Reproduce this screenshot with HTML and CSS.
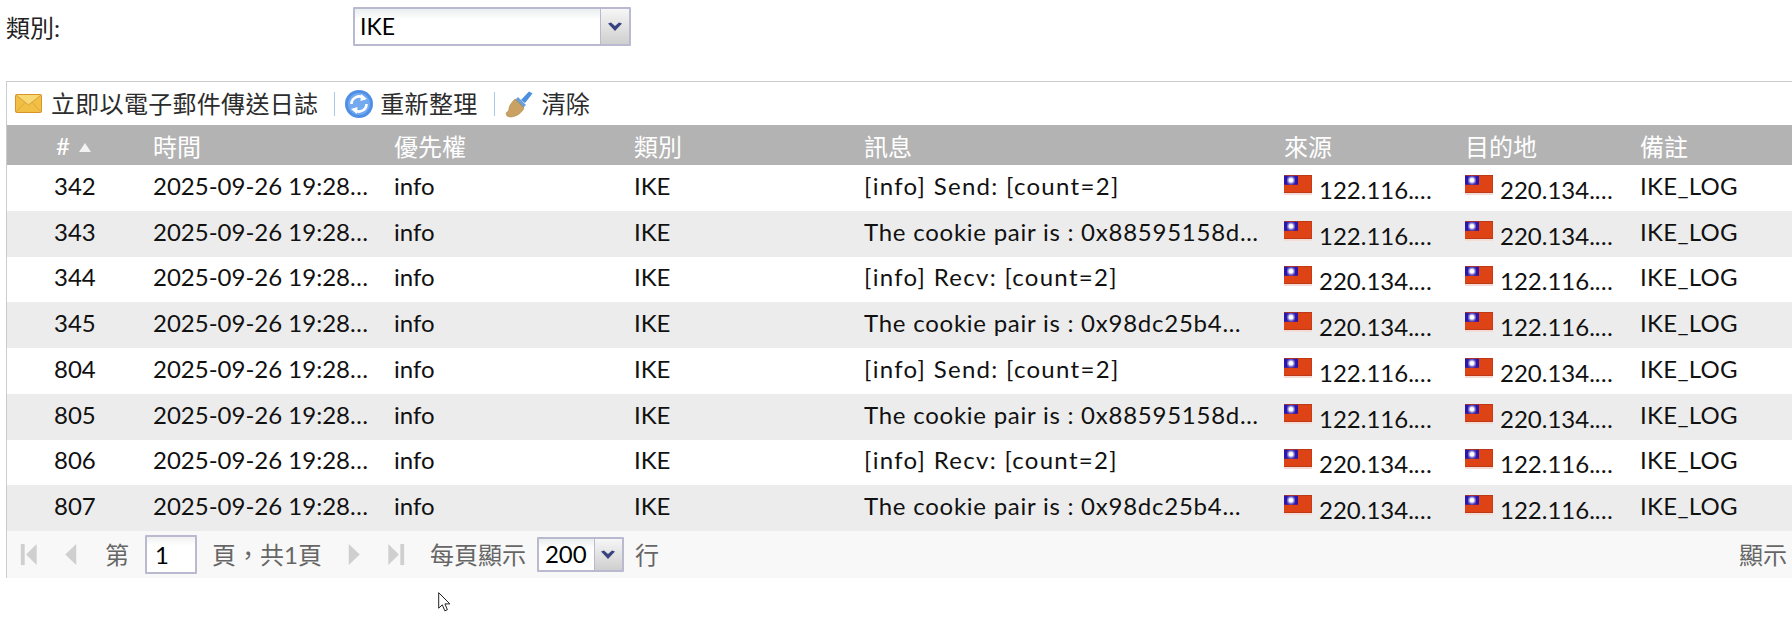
FILE: index.html
```html
<!DOCTYPE html>
<html lang="zh-Hant">
<head>
<meta charset="utf-8">
<title>日誌</title>
<link rel="stylesheet" href="styles.css">
</head>
<body>
<svg class="defs" width="0" height="0" aria-hidden="true">
  <defs>
    <filter id="soft"><feGaussianBlur stdDeviation="0.9"/></filter>
    <symbol id="flag" viewBox="0 0 28 20">
      <rect width="28" height="20" fill="#f3dcd6"/>
      <rect y="0" width="28" height="18" fill="#b5391a"/>
      <rect x="0" y="0.8" width="27.4" height="16.4" fill="#de4315"/>
      <rect x="0" y="0.8" width="14" height="9" fill="#2a17ad"/>
      <circle cx="7" cy="5.2" r="3.2" fill="#fff" filter="url(#soft)"/>
      <circle cx="7" cy="5.2" r="2" fill="#fff"/>
    </symbol>
    <symbol id="chev" viewBox="0 0 16 10">
      <path d="M1 1.5 L4 0.5 L8 4 L12 0.5 L15 1.5 L8 9 Z" fill="#37447f"/>
    </symbol>
  </defs>
</svg>

<div class="filter">
  <label class="filter-label">類別:</label>
  <div class="combo combo-large">
    <span class="combo-value">IKE</span>
    <span class="combo-btn"><svg class="chev"><use href="#chev"/></svg></span>
  </div>
</div>

<section class="panel">
  <div class="toolbar">
    <button class="tool">
      <svg class="ico-mail" viewBox="0 0 27 19"><rect x="0.5" y="0.5" width="26" height="18" rx="1" fill="#f2bf45" stroke="#d9932b"/><path d="M1 1 L13.5 11 L26 1" fill="#f7d873" stroke="#d9a03a"/><path d="M1 18 L10 8.5 M26 18 L17 8.5" stroke="#dfa53e" fill="none"/></svg>
      立即以電子郵件傳送日誌
    </button>
    <span class="sep"></span>
    <button class="tool tool-refresh">
      <svg class="ico-round" viewBox="0 0 28 28"><circle cx="14" cy="14" r="14" fill="#4f8fe6"/><circle cx="14" cy="14" r="11" fill="#73a9ef"/><path d="M6.5 14 A7.5 7.5 0 0 1 18.5 8" fill="none" stroke="#fff" stroke-width="2.6"/><path d="M21.5 14 A7.5 7.5 0 0 1 9.5 20" fill="none" stroke="#fff" stroke-width="2.6"/><path d="M16 4 L22 9 L15.5 11 Z M12 24 L6 19 L12.5 17 Z" fill="#fff"/></svg>
      重新整理
    </button>
    <span class="sep"></span>
    <button class="tool tool-clear">
      <svg class="ico-round" viewBox="0 0 28 28"><path d="M16 10 L24 1.5 L27.5 3.5 L20 13 Z" fill="#4c8fe0"/><path d="M13 7 L21 15 L18 18 L10 10 Z" fill="#6a9fd8"/><path d="M10 9 L19 18 C17 23 11 27 5 27 L2 26 L1 23 C2 22 4 21 4 19 C4 16 7 12 10 9 Z" fill="#c9a263" stroke="#a98547" stroke-width="0.6"/></svg>
      清除
    </button>
  </div>

  <table class="grid">
    <colgroup>
      <col class="c-num"><col class="c-time"><col class="c-pri"><col class="c-cat"><col class="c-msg"><col class="c-src"><col class="c-dst"><col class="c-note">
    </colgroup>
    <thead>
      <tr><th class="num-head">#<span class="sort"></span></th><th>時間</th><th>優先權</th><th>類別</th><th>訊息</th><th>來源</th><th>目的地</th><th>備註</th></tr>
    </thead>
    <tbody>
      <tr><td>342</td><td>2025-09-26 19:28…</td><td>info</td><td>IKE</td><td class="msg-short">[info] Send: [count=2]</td><td><svg class="flag"><use href="#flag"/></svg><span class="ip">122.116.…</span></td><td><svg class="flag"><use href="#flag"/></svg><span class="ip">220.134.…</span></td><td class="note">IKE_LOG</td></tr>
      <tr><td>343</td><td>2025-09-26 19:28…</td><td>info</td><td>IKE</td><td class="msg-long">The cookie pair is : 0x88595158d…</td><td><svg class="flag"><use href="#flag"/></svg><span class="ip">122.116.…</span></td><td><svg class="flag"><use href="#flag"/></svg><span class="ip">220.134.…</span></td><td class="note">IKE_LOG</td></tr>
      <tr><td>344</td><td>2025-09-26 19:28…</td><td>info</td><td>IKE</td><td class="msg-short">[info] Recv: [count=2]</td><td><svg class="flag"><use href="#flag"/></svg><span class="ip">220.134.…</span></td><td><svg class="flag"><use href="#flag"/></svg><span class="ip">122.116.…</span></td><td class="note">IKE_LOG</td></tr>
      <tr><td>345</td><td>2025-09-26 19:28…</td><td>info</td><td>IKE</td><td class="msg-long">The cookie pair is : 0x98dc25b4…</td><td><svg class="flag"><use href="#flag"/></svg><span class="ip">220.134.…</span></td><td><svg class="flag"><use href="#flag"/></svg><span class="ip">122.116.…</span></td><td class="note">IKE_LOG</td></tr>
      <tr><td>804</td><td>2025-09-26 19:28…</td><td>info</td><td>IKE</td><td class="msg-short">[info] Send: [count=2]</td><td><svg class="flag"><use href="#flag"/></svg><span class="ip">122.116.…</span></td><td><svg class="flag"><use href="#flag"/></svg><span class="ip">220.134.…</span></td><td class="note">IKE_LOG</td></tr>
      <tr><td>805</td><td>2025-09-26 19:28…</td><td>info</td><td>IKE</td><td class="msg-long">The cookie pair is : 0x88595158d…</td><td><svg class="flag"><use href="#flag"/></svg><span class="ip">122.116.…</span></td><td><svg class="flag"><use href="#flag"/></svg><span class="ip">220.134.…</span></td><td class="note">IKE_LOG</td></tr>
      <tr><td>806</td><td>2025-09-26 19:28…</td><td>info</td><td>IKE</td><td class="msg-short">[info] Recv: [count=2]</td><td><svg class="flag"><use href="#flag"/></svg><span class="ip">220.134.…</span></td><td><svg class="flag"><use href="#flag"/></svg><span class="ip">122.116.…</span></td><td class="note">IKE_LOG</td></tr>
      <tr><td>807</td><td>2025-09-26 19:28…</td><td>info</td><td>IKE</td><td class="msg-long">The cookie pair is : 0x98dc25b4…</td><td><svg class="flag"><use href="#flag"/></svg><span class="ip">220.134.…</span></td><td><svg class="flag"><use href="#flag"/></svg><span class="ip">122.116.…</span></td><td class="note">IKE_LOG</td></tr>
    </tbody>
  </table>

  <div class="pager">
    <svg class="pg pg-first" viewBox="0 0 18 24"><rect x="0.5" y="1" width="4" height="22" fill="#cfcfcf"/><path d="M17 1 V23 L6 12 Z" fill="#cfcfcf"/></svg>
    <svg class="pg pg-prev" viewBox="0 0 13 24"><path d="M12.5 1 V23 L1 12 Z" fill="#cfcfcf"/></svg>
    <span class="pg-text pg-di">第</span>
    <input class="pg-input" value="1" aria-label="頁">
    <span class="pg-text pg-of">頁，共1頁</span>
    <svg class="pg pg-next" viewBox="0 0 13 24"><path d="M0.5 1 V23 L12 12 Z" fill="#cfcfcf"/></svg>
    <svg class="pg pg-last" viewBox="0 0 18 24"><path d="M1 1 V23 L12 12 Z" fill="#cfcfcf"/><rect x="13.5" y="1" width="4" height="22" fill="#cfcfcf"/></svg>
    <span class="pg-text pg-size">每頁顯示</span>
    <div class="combo combo-small">
      <span class="combo-value">200</span>
      <span class="combo-btn"><svg class="chev"><use href="#chev"/></svg></span>
    </div>
    <span class="pg-text pg-row">行</span>
    <span class="pg-text pg-info">顯示</span>
  </div>
</section>

<svg class="cursor" viewBox="0 0 13 20" aria-hidden="true"><path d="M0.7 0.7 V16.2 L4.3 12.8 L6.8 18.8 L9.4 17.7 L6.9 11.9 L11.9 11.9 Z" fill="#fff" stroke="#222" stroke-width="1"/></svg>
</body>
</html>
```
FILE: styles.css
```css
* { box-sizing: border-box; }
html, body { margin: 0; padding: 0; }
body {
  width: 1792px;
  height: 625px;
  overflow: hidden;
  background: #fff;
  color: #111;
  font-family: "Lato", "Noto Sans CJK TC", sans-serif;
  font-size: 24px;
  position: relative;
}
.defs { position: absolute; }

.filter {
  display: flex;
  align-items: center;
  height: 46px;
  padding: 7px 0 0 6px;
  margin-bottom: 35px;
}
.filter-label { width: 347px; font-size: 24px; color: #222; }

.combo {
  display: flex;
  background: linear-gradient(#e9eeee, #fff 30%);
  border: 2px solid #b9b9d0;
  border-radius: 1px;
}
.combo-large { width: 278px; height: 39px; }
.combo-small { width: 87px; height: 35px; }
.combo-value { flex: 1; padding-left: 5px; color: #000; }
.combo-large .combo-value { font-size: 23px; line-height: 35px; }
.combo-small .combo-value { padding-left: 6px; font-size: 24px; line-height: 30px; }
.combo-btn {
  display: flex;
  align-items: center;
  justify-content: center;
  width: 29px;
  background: linear-gradient(#f6f6f6, #cfcfcf);
  border-left: 1px solid #b9b9d0;
}
.combo-small .combo-btn { width: 28px; }
.chev { width: 16px; height: 10px; }

.panel {
  margin-left: 6px;
  border-top: 1px solid #ccc;
  border-left: 1px solid #ccc;
  height: 497px;
}

.toolbar {
  display: flex;
  align-items: center;
  height: 43px;
  padding-left: 8px;
}
.tool {
  display: flex;
  align-items: center;
  border: 0;
  padding: 0;
  background: none;
  color: #2c2c2c;
  font: inherit;
  font-size: 24px;
  line-height: 1;
  letter-spacing: .3px;
}
.ico-mail { width: 27px; height: 19px; margin-right: 9px; }
.ico-round { width: 28px; height: 28px; margin-right: 9px; }
.tool-refresh .ico-round { margin-right: 7px; }
.sep { width: 1px; height: 24px; background: #aac6ea; margin: 0 10px 0 16px; }

.grid {
  width: 1785px;
  table-layout: fixed;
  border-collapse: collapse;
  border-spacing: 0;
}
.c-num { width: 146px; }
.c-time { width: 241px; }
.c-pri { width: 240px; }
.c-cat { width: 230px; }
.c-msg { width: 420px; }
.c-src { width: 181px; }
.c-dst { width: 175px; }
.c-note { width: 152px; }

.grid th {
  height: 40px;
  padding: 0;
  background: #b3b3b3;
  color: #fff;
  font-size: 24px;
  font-weight: 400;
  text-align: left;
}
.num-head { padding-left: 49px !important; }
.sort {
  display: inline-block;
  margin-left: 9px;
  vertical-align: 3px;
  border-left: 6px solid transparent;
  border-right: 6px solid transparent;
  border-bottom: 9px solid #f2f2f2;
}
.grid td {
  height: 45.75px;
  padding: 0 0 4px;
  white-space: nowrap;
  overflow: hidden;
  line-height: 26px;
}
.grid td:first-child { padding-left: 47px; }
.grid tbody tr:nth-child(even) td { background: #ececec; }
.msg-short { letter-spacing: 1.3px; }
.msg-long { letter-spacing: .75px; }
.note { letter-spacing: .3px; }
.flag {
  width: 28px;
  height: 20px;
  vertical-align: 0;
  margin-right: 7px;
}
.ip { position: relative; top: 4px; font-size: 24px; }

.pager {
  display: flex;
  align-items: center;
  height: 47px;
  background: #f8f8f8;
  color: #666;
  padding-left: 13px;
}
.pg { height: 23px; flex: none; }
.pg-first { width: 18px; }
.pg-prev { width: 13px; margin-left: 26px; }
.pg-next { width: 13px; margin-left: 26px; }
.pg-last { width: 18px; margin-left: 26px; }
.pg-text { font-size: 24px; line-height: 1; }
.pg-di { margin-left: 28px; }
.pg-input {
  width: 52px;
  height: 39px;
  margin-left: 16px;
  border: 2px solid #b9b9d0;
  border-radius: 1px;
  background: linear-gradient(#f1f1f1, #fff 25%);
  padding: 0 0 0 8px;
  font: inherit;
  font-size: 24px;
  color: #000;
}
.pg-of { margin-left: 15px; }
.pg-size { margin-left: 25px; }
.combo-small { margin-left: 11px; }
.pg-row { margin-left: 11px; }
.pg-info { margin-left: auto; padding-right: 5px; }

.cursor {
  position: absolute;
  left: 438px;
  top: 592px;
  width: 13px;
  height: 20px;
}
```
